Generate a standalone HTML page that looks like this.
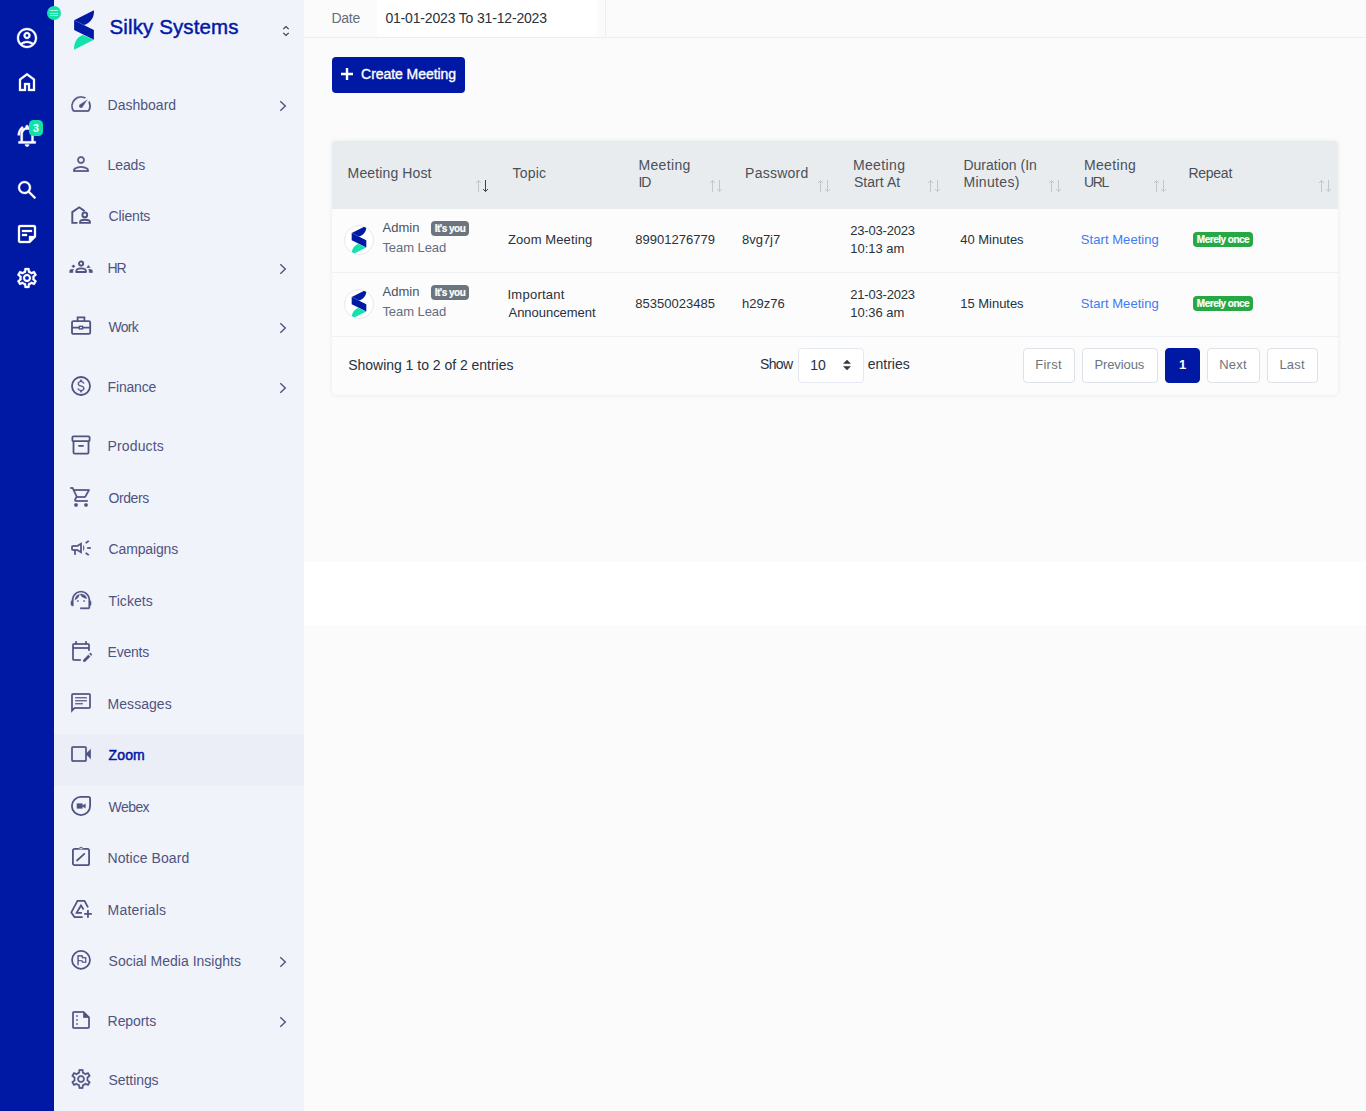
<!DOCTYPE html>
<html lang="en">
<head>
<meta charset="utf-8">
<title>Zoom Meetings - Silky Systems</title>
<style>
*{box-sizing:border-box;margin:0;padding:0}
html,body{width:1366px;height:1111px;overflow:hidden}
body{font-family:"Liberation Sans",sans-serif;background:#fbfbfb;color:#28313c;position:relative;font-size:14px}
a{text-decoration:none;color:inherit}
/* ---------- left rail ---------- */
#rail{position:absolute;left:0;top:0;width:54px;height:1111px;background:#0019a5}
#rail svg{position:absolute;left:15px;width:24px;height:24px;fill:#fff;stroke:#fff;stroke-width:.3}
#rail .cnt{position:absolute;left:29px;top:120px;width:14px;height:16px;border-radius:4.500px;background:#12e2a8;color:#fff;font-size:10.500px;font-weight:bold;line-height:16px;text-align:center}
#tog{position:absolute;left:47px;top:6px;width:14px;height:14px;border-radius:50%;background:#12e2a8;z-index:5}
#tog i{position:absolute;left:3px;width:8px;height:1px;background:#b6f3df}
/* ---------- sidebar ---------- */
#side{position:absolute;left:54px;top:0;width:250px;height:1111px;background:#f1f3fb}
#brand{position:absolute;left:55.500px;top:13px;font-size:20.500px;color:#0019a5;-webkit-text-stroke:.45px #0019a5;letter-spacing:.12px;line-height:28px;white-space:nowrap}
#logo{position:absolute;left:18px;top:9px;width:24px;height:40px}
#updn{position:absolute;left:227px;top:24px;width:10px;height:14px}
.mi{position:absolute;left:0;width:250px;height:50px;color:#4f5380}
.mi.act{color:#0019a5}
#actbg{position:absolute;left:0;top:733.600px;width:250px;height:52.200px;background:#eceef7}
.mi svg.ic{position:absolute;left:15px;top:12px;width:24px;height:24px;fill:#4f5380;stroke:#f1f3fb;stroke-width:.3}
.mi.act svg.ic{stroke:#eceef7}
.mi span{position:absolute;left:54px;top:0;line-height:50px;font-size:14px;white-space:nowrap}
.mi.act span{color:#0019a5;-webkit-text-stroke:.5px #0019a5}
.mi svg.ch{position:absolute;left:224px;top:19.500px;width:10px;height:12px;fill:none;stroke:#4f5380;stroke-width:1.4}
/* ---------- main ---------- */
#top{position:absolute;left:304px;top:0;width:1062px;height:38px;background:#fbfbfb;border-bottom:1px solid #eceef3}
#top .lbl{position:absolute;left:28px;top:0;line-height:36px;font-size:14px;color:#4d5560}
#top .inp{position:absolute;left:73px;top:0;width:220px;height:36.500px;border-radius:0 0 4px 4px;background:#fff;line-height:36px;font-size:14px;color:#28313c;padding-left:11px;white-space:nowrap}
#top .sep{position:absolute;left:301px;top:0;width:1px;height:37px;background:#eceef3}
#btn{position:absolute;left:332px;top:57px;width:133px;height:36px;border-radius:4px;background:#0019a5;color:#fff;font-size:14px;line-height:35px;white-space:nowrap}
#btn b{position:absolute;left:29px;top:0;font-weight:normal}
#btn svg{position:absolute;left:9px;top:11px;width:12px;height:12px}
#band{position:absolute;left:304px;top:562px;width:1062px;height:63px;background:#fff}

.t{position:absolute;white-space:nowrap;line-height:20px}
#card{position:absolute;left:332px;top:141px;width:1006px;height:253.500px;border-radius:4px;background:#fcfcfc;box-shadow:0 0 4px rgba(50,70,130,.11)}
#thead{position:absolute;left:332px;top:141px;width:1006px;height:67.500px;background:#e9ecef;border-radius:4px 4px 0 0}
.hr{position:absolute;left:332px;width:1006px;height:1px;background:#eef0f3}
.av{position:absolute;left:344px;width:30px;height:30px;border-radius:50%;overflow:hidden;background:#fff;border:1px solid #e6e9f2}
.av svg{position:absolute;left:0;top:0;width:28px;height:28px}
.bdg{position:absolute;height:15px;border-radius:4px;-webkit-text-stroke:.2px #fff;color:#fff;font-size:10px;font-weight:bold;line-height:15px;text-align:center;white-space:nowrap;letter-spacing:-.5px}
.srt{position:absolute;top:179px;width:14px;height:14px;fill:none;stroke:#c3c7cc;stroke-width:1}
.pg{position:absolute;top:348px;height:35px;border:1px solid #dee2e6;border-radius:4px;background:#fff}
#sel{position:absolute;left:798px;top:348px;width:66px;height:35px;border:1px solid #e3e8f1;border-radius:4px;background:#fff}
</style>
</head>
<body>
<div id="rail">
<svg style="top:26px" viewBox="0 0 24 24"><path d="M12 2C6.480 2 2 6.480 2 12s4.480 10 10 10 10-4.480 10-10S17.520 2 12 2zM7.350 18.500C8.660 17.560 10.260 17 12 17s3.340.560 4.650 1.500C15.340 19.440 13.740 20 12 20s-3.340-.560-4.650-1.500zm10.790-1.380C16.450 15.800 14.320 15 12 15s-4.450.800-6.140 2.120C4.700 15.730 4 13.950 4 12c0-4.420 3.580-8 8-8s8 3.580 8 8c0 1.950-.700 3.730-1.860 5.120zM12 6c-1.930 0-3.500 1.570-3.500 3.500S10.070 13 12 13s3.500-1.570 3.500-3.500S13.930 6 12 6zm0 5c-.830 0-1.500-.670-1.500-1.500S11.170 8 12 8s1.500.670 1.500 1.500S12.830 11 12 11z"/></svg>
<svg style="top:70px" viewBox="0 0 24 24"><path d="M6 19h3v-6h6v6h3v-9l-6-4.500L6 10Zm-2 2V9l8-6 8 6v12h-7v-6h-2v6Z"/></svg>
<svg style="top:123px;overflow:visible" viewBox="0 0 24 24"><g transform="translate(12.100 12.900) scale(1.080) translate(-12 -12)"><path transform="translate(1.300 1.500)" d="M2 10q0-2.550 1.125-4.775T6.150 1.500L7.350 3.100Q5.750 4.325 4.875 6.137 4 7.950 4 10Z"/><path d="M4 19v-2h2v-7q0-2.075 1.250-3.688Q8.500 4.700 10.500 4.200v-.700q0-.625.438-1.062Q11.375 2 12 2t1.062.438q.438.437.438 1.062v.700q2 .500 3.250 2.112Q18 7.925 18 10v7h2v2ZM12 22q-.825 0-1.412-.587Q10 20.825 10 20h4q0 .825-.587 1.413Q12.825 22 12 22Zm-4-5h8v-7q0-1.650-1.175-2.825Q13.650 6 12 6q-1.650 0-2.825 1.175Q8 8.350 8 10Z"/></g></svg>
<span class="cnt">3</span>
<svg style="top:178px" viewBox="0 0 24 24"><path d="M19.600 21l-6.300-6.300q-.750.600-1.725.950Q10.600 16 9.500 16q-2.725 0-4.612-1.887Q3 12.225 3 9.500q0-2.725 1.888-4.613Q6.775 3 9.500 3t4.613 1.887Q16 6.775 16 9.500q0 1.100-.350 2.075-.350.975-.950 1.725l6.300 6.300ZM9.500 14q1.875 0 3.188-1.312Q14 11.375 14 9.500q0-1.875-1.312-3.188Q11.375 5 9.500 5 7.625 5 6.312 6.312 5 7.625 5 9.500q0 1.875 1.312 3.188Q7.625 14 9.500 14Z"/></svg>
<svg style="top:222px" viewBox="0 0 24 24"><path d="M19 5v9h-5v5H5V5h14m0-2H5c-1.100 0-2 .9-2 2v14c0 1.100.9 2 2 2h10l6-6V5c0-1.100-.9-2-2-2zm-7 11H7v-2h5v2zm5-4H7V8h10v2z"/></svg>
<svg style="top:266px" viewBox="0 0 24 24"><path d="M19.430 12.980c.040-.320.070-.640.070-.980 0-.340-.030-.660-.070-.980l2.110-1.650c.190-.150.240-.420.120-.640l-2-3.460c-.090-.160-.260-.250-.440-.250-.060 0-.120.010-.170.030l-2.490 1c-.520-.400-1.080-.730-1.690-.980l-.380-2.650C14.460 2.180 14.250 2 14 2h-4c-.250 0-.460.180-.490.420l-.380 2.650c-.610.250-1.170.590-1.690.980l-2.490-1c-.060-.020-.120-.030-.180-.030-.170 0-.340.090-.430.250l-2 3.460c-.130.220-.070.490.120.640l2.110 1.650c-.040.320-.070.650-.070.980 0 .330.030.660.070.980l-2.110 1.650c-.190.150-.240.420-.120.640l2 3.460c.090.160.260.250.440.250.060 0 .120-.010.170-.030l2.490-1c.520.400 1.080.730 1.690.980l.380 2.650c.030.240.240.420.490.420h4c.250 0 .460-.180.490-.420l.380-2.650c.610-.250 1.170-.590 1.690-.980l2.490 1c.060.020.120.030.180.030.170 0 .340-.090.430-.250l2-3.460c.120-.220.070-.490-.120-.640l-2.110-1.650zm-1.980-1.710c.040.310.050.520.050.730 0 .210-.020.430-.050.730l-.140 1.130.890.700 1.080.840-.700 1.210-1.270-.510-1.040-.420-.900.680c-.430.320-.840.560-1.250.730l-1.060.430-.160 1.130-.200 1.350h-1.400l-.190-1.350-.160-1.130-1.060-.430c-.430-.180-.830-.410-1.230-.710l-.910-.700-1.060.430-1.270.510-.700-1.210 1.080-.840.890-.700-.140-1.130c-.030-.310-.050-.540-.050-.740s.020-.430.050-.730l.140-1.130-.890-.700-1.080-.840.700-1.210 1.270.510 1.040.420.900-.680c.430-.320.840-.560 1.250-.730l1.060-.430.160-1.130.200-1.350h1.390l.190 1.350.160 1.130 1.060.430c.430.180.830.410 1.230.710l.910.700 1.060-.430 1.270-.510.700 1.210-1.070.850-.890.700.140 1.130zM12 8c-2.210 0-4 1.790-4 4s1.790 4 4 4 4-1.790 4-4-1.790-4-4-4zm0 6c-1.100 0-2-.9-2-2s.9-2 2-2 2 .9 2 2-.9 2-2 2z"/></svg>
</div>
<div id="tog"><i style="top:4px"></i><i style="top:6.5px"></i><i style="top:9px"></i></div>
<!--SIDE-->
<div id="side">
<div id="actbg"></div>
<svg id="logo" style="left:0;top:0;width:60px;height:60px" viewBox="0 0 60 60"><path d="M20.100 20.200L39.900 10.300C40.600 17.500 36 23.700 30 24.900Z" fill="#001aa3"/><path d="M20.100 20.200L39.900 30V39.800L20.100 30Z" fill="#001aa3"/><path d="M20.100 49.700C19.400 42.500 24 36.300 28.900 35.100L39.900 39.800Z" fill="#13e2ab"/></svg>
<div id="brand">Silky Systems</div>
<svg id="updn" viewBox="0 0 10 14"><path d="M2.300 5.200L5 2.500L7.700 5.200M2.300 8.800L5 11.500L7.700 8.800" fill="none" stroke="#3c4043" stroke-width="1.200"/></svg>
<a class="mi" style="top:80px"><svg class="ic" viewBox="0 0 24 24"><path d="M20.380 8.570l-1.230 1.850a8 8 0 0 1-.220 7.580H5.070A8 8 0 0 1 15.580 6.850l1.850-1.230A10 10 0 0 0 3.350 19a2 2 0 0 0 1.720 1h13.850a2 2 0 0 0 1.740-1 10 10 0 0 0-.270-10.440zm-9.790 6.840a2 2 0 0 0 2.830 0l5.660-8.490-8.490 5.660a2 2 0 0 0 0 2.830z"/></svg><span style="left:53.6px;letter-spacing:-0.0px">Dashboard</span><svg class="ch" viewBox="0 0 10 12"><path d="M2.300 1.300L7.300 6L2.300 10.700"/></svg></a>
<a class="mi" style="top:140px"><svg class="ic" viewBox="0 0 24 24"><path d="M12 6c1.100 0 2 .9 2 2s-.9 2-2 2-2-.9-2-2 .9-2 2-2m0 10c2.700 0 5.800 1.290 6 2H6c.230-.720 3.310-2 6-2m0-12C9.790 4 8 5.790 8 8s1.790 4 4 4 4-1.790 4-4-1.790-4-4-4zm0 10c-2.670 0-8 1.340-8 4v2h16v-2c0-2.660-5.330-4-8-4z"/></svg><span style="left:53.6px;letter-spacing:-0.11px">Leads</span></a>
<a class="mi" style="top:191px"><svg class="ic" viewBox="0 0 24 24"><g fill="none" stroke="#4f5380"><path d="M8.500 19.900H3.300V9.100L10.200 4.300L15.600 8.100" stroke-width="1.9"/><circle cx="15.800" cy="11.900" r="2.350" stroke-width="2"/><path d="M11 19.950v-.8c0-1.700 2.900-2.400 5-2.400s5 .7 5 2.400v.8z" stroke-width="1.8" stroke-linejoin="round"/></g></svg><span style="left:54.6px;letter-spacing:-0.17px">Clients</span></a>
<a class="mi" style="top:243px"><svg class="ic" viewBox="0 0 24 24"><g fill="none" stroke="#4f5380"><circle cx="12.100" cy="8.600" r="2.100" stroke-width="1.9"/><path d="M7.200 17v-.6c0-2 2.400-3 4.900-3s4.900 1 4.900 3V17z" stroke-width="1.800" stroke-linejoin="round"/></g><path d="M4.400 9.500L6.500 11.300L4.400 13.100L2.300 11.300zM.300 17.900V16.200c0-1.300 1-2.200 2.400-2.200H5.100c-.6.8-.9 1.700-.9 2.700v1.200zM19.450 9.800L21.700 13.100H17.200zM23.800 17.900V16.200c0-1.300-1-2.200-2.400-2.200H19c.6.8.9 1.700.9 2.700v1.200z"/></svg><span style="left:53.6px;letter-spacing:-1.21px">HR</span><svg class="ch" viewBox="0 0 10 12"><path d="M2.300 1.300L7.300 6L2.300 10.700"/></svg></a>
<a class="mi" style="top:302px"><svg class="ic" viewBox="0 0 24 24"><g fill="none" stroke="#4f5380" stroke-width="1.8"><rect x="3" y="7.100" width="18.200" height="12.800" rx="1.400"/><path d="M8.600 7V3.300h6.800V7M3 13.600h7.400M13.600 13.600H21"/><rect x="10.400" y="12.300" width="3.200" height="2.600" stroke-width="1.400"/></g></svg><span style="left:54.6px;letter-spacing:-0.74px">Work</span><svg class="ch" viewBox="0 0 10 12"><path d="M2.300 1.300L7.300 6L2.300 10.700"/></svg></a>
<a class="mi" style="top:362px"><svg class="ic" viewBox="0 0 24 24"><circle cx="12" cy="12" r="9" fill="none" stroke="#4f5380" stroke-width="1.800"/><path d="M12.310 11.140c-1.770-.450-2.340-.940-2.340-1.670 0-.840.790-1.430 2.100-1.430 1.380 0 1.900.660 1.940 1.640h1.710c-.050-1.340-.870-2.570-2.490-2.970V5H10.900v1.690c-1.510.320-2.720 1.300-2.720 2.810 0 1.790 1.490 2.690 3.660 3.210 1.950.460 2.340 1.150 2.340 1.870 0 .530-.390 1.390-2.100 1.390-1.600 0-2.230-.720-2.320-1.640H8.040c.100 1.700 1.360 2.660 2.860 2.970V19h2.340v-1.670c1.520-.290 2.720-1.160 2.730-2.770-.010-2.200-1.900-2.960-3.660-3.420z" transform="translate(12 12) scale(.93) translate(-12 -12)"/></svg><span style="left:53.6px;letter-spacing:-0.19px">Finance</span><svg class="ch" viewBox="0 0 10 12"><path d="M2.300 1.300L7.300 6L2.300 10.700"/></svg></a>
<a class="mi" style="top:421px"><svg class="ic" viewBox="0 0 24 24"><g fill="none" stroke="#4f5380" stroke-width="1.8"><rect x="3.400" y="3.400" width="17.200" height="4.800" rx="1"/><path d="M4.500 8.300v11.200c0 .6.500 1.100 1.100 1.100h12.800c.6 0 1.100-.5 1.100-1.100V8.300M9.300 12.800h5.400"/></g></svg><span style="left:53.6px;letter-spacing:0.12px">Products</span></a>
<a class="mi" style="top:473px"><svg class="ic" viewBox="0 0 24 24"><path d="M15.550 13c.750 0 1.410-.410 1.750-1.030l3.580-6.490c.370-.660-.110-1.480-.870-1.480H5.210l-.940-2H1v2h2l3.600 7.590-1.350 2.440C4.520 15.370 5.480 17 7 17h12v-2H7l1.100-2h7.450zM6.160 6h12.150l-2.760 5H8.530L6.160 6zM7 18c-1.100 0-1.990.9-1.990 2S5.900 22 7 22s2-.9 2-2-.9-2-2-2zm10 0c-1.100 0-1.990.9-1.990 2s.890 2 1.990 2 2-.9 2-2-.9-2-2-2z"/></svg><span style="left:54.6px;letter-spacing:-0.44px">Orders</span></a>
<a class="mi" style="top:524px"><svg class="ic" viewBox="0 0 24 24"><path d="M18 11v2h4v-2h-4zm-2 6.610c.960.710 2.210 1.650 3.200 2.390.400-.530.800-1.070 1.200-1.600-.990-.740-2.240-1.680-3.200-2.400-.400.540-.800 1.080-1.200 1.610zM20.400 5.600c-.400-.530-.800-1.070-1.200-1.600-.990.740-2.240 1.680-3.200 2.400.400.530.800 1.070 1.200 1.600.960-.720 2.210-1.650 3.200-2.400zM4 9c-1.100 0-2 .9-2 2v2c0 1.100.9 2 2 2h1v4h2v-4h1l5 3V6L8 9H4zm5.030 1.710L11 9.530v4.940l-1.970-1.180-.480-.290H4v-2h4.550l.480-.290zM15.500 12c0-1.330-.580-2.530-1.500-3.350v6.690c.920-.810 1.500-2.010 1.500-3.340z"/></svg><span style="left:54.6px;letter-spacing:-0.16px">Campaigns</span></a>
<a class="mi" style="top:576px"><svg class="ic" viewBox="0 0 24 24"><g transform="translate(12 12) scale(1.04) translate(-12 -12)"><path d="M21 12.220C21 6.730 16.740 3 12 3c-4.690 0-9 3.650-9 9.280-.600.340-1 .980-1 1.720v2c0 1.100.900 2 2 2h1v-6.100c0-3.870 3.130-7 7-7s7 3.130 7 7V19h-8v2h8c1.100 0 2-.900 2-2v-1.220c.590-.310 1-.920 1-1.640v-2.300c0-.700-.410-1.310-1-1.620z"/><circle cx="9" cy="13" r="1"/><circle cx="15" cy="13" r="1"/><path d="M18 11.030C17.520 8.180 15.040 6 12.050 6c-3.030 0-6.290 2.510-6.030 6.450 2.470-1.010 4.330-3.210 4.860-5.890 1.310 2.630 4 4.440 7.120 4.470z"/></g></svg><span style="left:54.6px;letter-spacing:0.06px">Tickets</span></a>
<a class="mi" style="top:627px"><svg class="ic" viewBox="0 0 24 24"><path d="M5 10h14v2h2V6c0-1.100-.9-2-2-2h-1V2h-2v2H8V2H6v2H5c-1.110 0-1.990.9-1.990 2L3 20c0 1.100.890 2 2 2h7v-2H5V10zm0-4h14v2H5V6zm17.840 10.280l-.710.710-2.120-2.120.710-.710c.390-.390 1.020-.390 1.410 0l.710.710c.390.390.390 1.020 0 1.410zm-3.540-.700l2.120 2.120-5.300 5.300H14v-2.120l5.300-5.300z"/></svg><span style="left:53.6px;letter-spacing:-0.22px">Events</span></a>
<a class="mi" style="top:679px"><svg class="ic" viewBox="0 0 24 24"><path d="M4 4h16v12H5.170L4 17.170V4m0-2c-1.100 0-1.990.9-1.990 2L2 22l4-4h14c1.100 0 2-.9 2-2V4c0-1.100-.9-2-2-2H4zm2 10h8v1.600H6V12zm0-3h12v1.600H6V9zm0-3h12v1.600H6V6z"/></svg><span style="left:53.6px;letter-spacing:0.04px">Messages</span></a>
<a class="mi act" style="top:730px"><svg class="ic" viewBox="0 0 24 24"><path d="M4 20q-.825 0-1.412-.587Q2 18.825 2 18V6q0-.825.588-1.412Q3.175 4 4 4h12q.825 0 1.413.588Q18 5.175 18 6v4.500l4-4v11l-4-4V18q0 .825-.587 1.413Q16.825 20 16 20Zm0-2h12V6H4v12Z"/></svg><span style="left:54.6px;letter-spacing:0.13px">Zoom</span></a>
<a class="mi" style="top:782px"><svg class="ic" viewBox="0 0 24 24"><path d="M12 2.900H19.600a1.500 1.500 0 0 1 1.500 1.500V12A9.100 9.100 0 1 1 12 2.900Z" fill="none" stroke="#4f5380" stroke-width="1.800"/><path d="M7.600 9.200h6.100v1.900l3.100-1.600v5l-3.100-1.600v1.900H7.600z"/></svg><span style="left:54.6px;letter-spacing:-0.58px">Webex</span></a>
<a class="mi" style="top:833px"><svg class="ic" viewBox="0 0 24 24"><g fill="none" stroke="#4f5380"><rect x="3.900" y="3.900" width="16.200" height="16.200" rx="1.700" stroke-width="1.800"/><path d="M8 15.500L15.300 8.900" stroke-width="1.700" stroke-linecap="round"/></g><path d="M9.800 3.900a2.200 2.200 0 0 1 4.400 0z"/><circle cx="12" cy="3.600" r=".7" fill="#f1f3fb"/></svg><span style="left:53.6px;letter-spacing:0.06px">Notice Board</span></a>
<a class="mi" style="top:885px"><svg class="ic" viewBox="0 0 24 24"><g fill="none" stroke="#4f5380" stroke-width="1.75"><path d="M19 10.400L15.500 3.900H8.500L2.300 15.400L5.500 20.100H13.700"/><path d="M12.900 15.900H7.600L12 8.500L14.600 12.400"/><path d="M15.200 16.900H22.800M18.950 13.100V20.700"/></g></svg><span style="left:53.6px;letter-spacing:0.2px">Materials</span></a>
<a class="mi" style="top:936px"><svg class="ic" viewBox="0 0 24 24"><circle cx="12" cy="11.900" r="8.950" fill="none" stroke="#4f5380" stroke-width="1.750"/><path fill-rule="evenodd" d="M8.200 17.200V7.100h5.500l.7 1.900h3.100v5.900h-4.500l-.7-1.600h-2.400v3.900zM9.900 8.800v3.100h3.500l.7 1.600h1.900V10.600h-2.900l-.7-1.800z"/></svg><span style="left:54.6px;letter-spacing:-0.0px">Social Media Insights</span><svg class="ch" viewBox="0 0 10 12"><path d="M2.300 1.300L7.300 6L2.300 10.700"/></svg></a>
<a class="mi" style="top:996px"><svg class="ic" viewBox="0 0 24 24"><path d="M15 3H5c-1.100 0-1.990.900-1.990 2L3 19c0 1.100.890 2 1.990 2H19c1.100 0 2-.900 2-2V9l-6-6zM5 19V5h9v5h5v9H5zM9 8c0 .550-.450 1-1 1s-1-.450-1-1 .450-1 1-1 1 .450 1 1zm0 4c0 .550-.450 1-1 1s-1-.450-1-1 .450-1 1-1 1 .450 1 1zm0 4c0 .550-.450 1-1 1s-1-.450-1-1 .450-1 1-1 1 .450 1 1z"/></svg><span style="left:53.6px;letter-spacing:-0.07px">Reports</span><svg class="ch" viewBox="0 0 10 12"><path d="M2.300 1.300L7.300 6L2.300 10.700"/></svg></a>
<a class="mi" style="top:1055px"><svg class="ic" viewBox="0 0 24 24"><path d="M19.430 12.980c.040-.320.070-.640.070-.980 0-.340-.030-.660-.070-.980l2.110-1.650c.190-.150.240-.420.120-.640l-2-3.460c-.090-.160-.260-.250-.440-.250-.060 0-.120.010-.170.030l-2.490 1c-.520-.400-1.080-.730-1.690-.980l-.380-2.650C14.460 2.180 14.250 2 14 2h-4c-.250 0-.460.180-.490.420l-.380 2.650c-.610.250-1.170.590-1.690.980l-2.490-1c-.060-.020-.120-.030-.180-.030-.170 0-.340.090-.430.250l-2 3.460c-.130.220-.070.490.120.640l2.110 1.650c-.040.320-.070.650-.070.980 0 .330.030.660.070.980l-2.110 1.650c-.190.150-.240.420-.120.640l2 3.460c.090.160.260.250.440.250.060 0 .120-.010.170-.030l2.490-1c.520.400 1.080.730 1.690.980l.380 2.650c.030.240.240.420.490.420h4c.250 0 .460-.180.490-.420l.380-2.650c.610-.250 1.170-.590 1.690-.980l2.490 1c.060.020.120.030.180.030.170 0 .340-.090.430-.250l2-3.460c.120-.220.070-.490-.120-.640l-2.110-1.650zm-1.980-1.710c.040.310.050.520.050.730 0 .210-.020.430-.050.730l-.140 1.130.890.700 1.080.840-.700 1.210-1.270-.510-1.040-.420-.900.680c-.430.320-.840.560-1.250.730l-1.060.430-.160 1.130-.200 1.350h-1.400l-.190-1.350-.160-1.130-1.060-.430c-.430-.180-.830-.410-1.230-.710l-.910-.700-1.060.430-1.270.510-.700-1.210 1.080-.840.890-.700-.140-1.130c-.030-.310-.050-.540-.050-.740s.020-.430.050-.730l.140-1.130-.890-.700-1.080-.840.700-1.210 1.270.510 1.040.420.900-.680c.430-.320.840-.560 1.250-.730l1.060-.430.160-1.130.200-1.350h1.390l.190 1.350.160 1.130 1.060.430c.430.180.830.410 1.230.710l.910.700 1.060-.430 1.270-.510.700 1.210-1.070.850-.890.700.140 1.130zM12 8c-2.210 0-4 1.790-4 4s1.790 4 4 4 4-1.790 4-4-1.790-4-4-4zm0 6c-1.100 0-2-.9-2-2s.9-2 2-2 2 .9 2 2-.9 2-2 2z"/></svg><span style="left:54.6px;letter-spacing:-0.08px">Settings</span></a>
</div>
<!--/SIDE-->
<!--MAIN-->
<div id="top"><div class="inp"></div><div class="sep"></div></div>
<a id="btn"><svg viewBox="0 0 12 12"><path d="M4.800 0h2.400v4.800H12v2.400H7.200V12H4.800V7.200H0V4.800h4.800z" fill="#fff"/></svg></a>
<span class="t" style="left:331.4px;top:8.1px;font-size:14px;color:#616e80;letter-spacing:-0.23px;">Date</span>
<span class="t" style="left:385.4px;top:8.1px;font-size:14px;color:#28313c;letter-spacing:-0.17px;">01-01-2023 To 31-12-2023</span>
<span class="t" style="left:361.1px;top:64.1px;font-size:14px;color:#fff;-webkit-text-stroke:.35px #fff;letter-spacing:-0.06px;">Create Meeting</span>
<div id="card"></div><div id="thead"></div>
<div class="hr" style="top:272px"></div><div class="hr" style="top:336px"></div>
<svg class="srt" style="left:474px" viewBox="0 0 14 14"><path d="M4.500 13V1.500M2 4L4.500 1.500L7 4"/><path d="M11.500 1V12.500M9 10L11.500 12.500L14 10" stroke="#3c4248"/></svg>
<svg class="srt" style="left:708px" viewBox="0 0 14 14"><path d="M4.500 13V1.500M2 4L4.500 1.500L7 4"/><path d="M11.500 1V12.500M9 10L11.500 12.500L14 10"/></svg>
<svg class="srt" style="left:816px" viewBox="0 0 14 14"><path d="M4.500 13V1.500M2 4L4.500 1.500L7 4"/><path d="M11.500 1V12.500M9 10L11.500 12.500L14 10"/></svg>
<svg class="srt" style="left:926px" viewBox="0 0 14 14"><path d="M4.500 13V1.500M2 4L4.500 1.500L7 4"/><path d="M11.500 1V12.500M9 10L11.500 12.500L14 10"/></svg>
<svg class="srt" style="left:1047px" viewBox="0 0 14 14"><path d="M4.500 13V1.500M2 4L4.500 1.500L7 4"/><path d="M11.500 1V12.500M9 10L11.500 12.500L14 10"/></svg>
<svg class="srt" style="left:1151.5px" viewBox="0 0 14 14"><path d="M4.500 13V1.500M2 4L4.500 1.500L7 4"/><path d="M11.500 1V12.500M9 10L11.500 12.500L14 10"/></svg>
<svg class="srt" style="left:1316.5px" viewBox="0 0 14 14"><path d="M4.500 13V1.500M2 4L4.500 1.500L7 4"/><path d="M11.500 1V12.500M9 10L11.500 12.500L14 10"/></svg>
<div class="av" style="top:224.5px"><svg viewBox="0 0 28 28"><g transform="translate(14 14.200) scale(.737) translate(-30 -30)"><path d="M20.100 20.200L39.900 10.300C40.600 17.500 36 23.700 30 24.900Z" fill="#001aa3"/><path d="M20.100 20.200L39.900 30V39.800L20.100 30Z" fill="#001aa3"/><path d="M20.100 49.700C19.400 42.500 24 36.300 28.900 35.100L39.900 39.800Z" fill="#13e2ab"/></g></svg></div>
<span class="bdg" style="left:431px;top:221px;width:38px;background:#6c757d">It's you</span>
<span class="bdg" style="left:1193px;top:232px;width:60px;background:#28a745">Merely once</span>
<div class="av" style="top:288.5px"><svg viewBox="0 0 28 28"><g transform="translate(14 14.200) scale(.737) translate(-30 -30)"><path d="M20.100 20.200L39.900 10.300C40.600 17.500 36 23.700 30 24.900Z" fill="#001aa3"/><path d="M20.100 20.200L39.900 30V39.800L20.100 30Z" fill="#001aa3"/><path d="M20.100 49.700C19.400 42.500 24 36.300 28.900 35.100L39.900 39.800Z" fill="#13e2ab"/></g></svg></div>
<span class="bdg" style="left:431px;top:285px;width:38px;background:#6c757d">It's you</span>
<span class="bdg" style="left:1193px;top:296px;width:60px;background:#28a745">Merely once</span>
<div id="sel"><svg style="position:absolute;left:43px;top:10px;width:10px;height:12px" viewBox="0 0 10 12"><path d="M1 4.700L5 0.700L9 4.700ZM1 7.300L5 11.300L9 7.300Z" fill="#343a40"/></svg></div>
<div class="pg" style="left:1023px;width:52px;"></div>
<div class="pg" style="left:1082px;width:76px;"></div>
<div class="pg" style="left:1165px;width:35px;background:#0019a5;border-color:#0019a5;"></div>
<div class="pg" style="left:1207px;width:53px;"></div>
<div class="pg" style="left:1267px;width:51px;"></div>
<span class="t" style="left:347.6px;top:163.2px;font-size:14px;color:#495057;letter-spacing:0.13px;">Meeting Host</span>
<span class="t" style="left:512.6px;top:163.2px;font-size:14px;color:#495057;letter-spacing:0.18px;">Topic</span>
<span class="t" style="left:638.4px;top:155.3px;font-size:14px;color:#495057;letter-spacing:0.36px;">Meeting</span>
<span class="t" style="left:638.4px;top:172.1px;font-size:14px;color:#495057;letter-spacing:-1.09px;">ID</span>
<span class="t" style="left:745.1px;top:163.2px;font-size:14px;color:#495057;letter-spacing:0.23px;">Password</span>
<span class="t" style="left:852.9px;top:155.3px;font-size:14px;color:#495057;letter-spacing:0.38px;">Meeting</span>
<span class="t" style="left:853.9px;top:172.1px;font-size:14px;color:#495057;letter-spacing:0.06px;">Start At</span>
<span class="t" style="left:963.4px;top:155.3px;font-size:14px;color:#495057;letter-spacing:0.03px;">Duration (In</span>
<span class="t" style="left:963.4px;top:172.1px;font-size:14px;color:#495057;letter-spacing:0.33px;">Minutes)</span>
<span class="t" style="left:1083.9px;top:155.3px;font-size:14px;color:#495057;letter-spacing:0.36px;">Meeting</span>
<span class="t" style="left:1083.9px;top:172.1px;font-size:14px;color:#495057;letter-spacing:-1.31px;">URL</span>
<span class="t" style="left:1188.4px;top:163.2px;font-size:14px;color:#495057;letter-spacing:-0.25px;">Repeat</span>
<span class="t" style="left:382.4px;top:217.5px;font-size:13px;color:#4a525d;letter-spacing:0.07px;">Admin</span>
<span class="t" style="left:382.4px;top:237.9px;font-size:13px;color:#616e80;letter-spacing:-0.06px;">Team Lead</span>
<span class="t" style="left:635.3px;top:229.8px;font-size:13px;color:#28313c;letter-spacing:0.02px;">89901276779</span>
<span class="t" style="left:742.0px;top:229.8px;font-size:13px;color:#28313c;letter-spacing:-0.02px;">8vg7j7</span>
<span class="t" style="left:850.2px;top:220.8px;font-size:13px;color:#28313c;letter-spacing:-0.19px;">23-03-2023</span>
<span class="t" style="left:850.2px;top:238.6px;font-size:13px;color:#28313c;letter-spacing:-0.01px;">10:13 am</span>
<span class="t" style="left:960.3px;top:229.8px;font-size:13px;color:#28313c;letter-spacing:-0.03px;">40 Minutes</span>
<span class="t" style="left:1080.8px;top:229.8px;font-size:13px;color:#3d7bf2;letter-spacing:0.06px;">Start Meeting</span>
<span class="t" style="left:508.0px;top:229.8px;font-size:13px;color:#28313c;letter-spacing:0.1px;">Zoom Meeting</span>
<span class="t" style="left:382.4px;top:281.5px;font-size:13px;color:#4a525d;letter-spacing:0.07px;">Admin</span>
<span class="t" style="left:382.4px;top:301.9px;font-size:13px;color:#616e80;letter-spacing:-0.06px;">Team Lead</span>
<span class="t" style="left:635.3px;top:293.8px;font-size:13px;color:#28313c;letter-spacing:0.02px;">85350023485</span>
<span class="t" style="left:742.0px;top:293.8px;font-size:13px;color:#28313c;letter-spacing:0.02px;">h29z76</span>
<span class="t" style="left:850.2px;top:284.8px;font-size:13px;color:#28313c;letter-spacing:-0.19px;">21-03-2023</span>
<span class="t" style="left:850.2px;top:302.6px;font-size:13px;color:#28313c;letter-spacing:-0.01px;">10:36 am</span>
<span class="t" style="left:960.3px;top:293.8px;font-size:13px;color:#28313c;letter-spacing:-0.03px;">15 Minutes</span>
<span class="t" style="left:1080.8px;top:293.8px;font-size:13px;color:#3d7bf2;letter-spacing:0.06px;">Start Meeting</span>
<span class="t" style="left:507.5px;top:284.6px;font-size:13px;color:#28313c;letter-spacing:0.25px;">Important</span>
<span class="t" style="left:508.5px;top:302.6px;font-size:13px;color:#28313c;letter-spacing:-0.03px;">Announcement</span>
<span class="t" style="left:348.2px;top:355.0px;font-size:14px;color:#28313c;letter-spacing:-0.02px;">Showing 1 to 2 of 2 entries</span>
<span class="t" style="left:760.1px;top:354.0px;font-size:14px;color:#28313c;letter-spacing:-0.7px;">Show</span>
<span class="t" style="left:810.3px;top:355.0px;font-size:14px;color:#28313c;letter-spacing:-0.09px;">10</span>
<span class="t" style="left:867.7px;top:354.0px;font-size:14px;color:#28313c;">entries</span>
<span class="t" style="left:1035.3px;top:354.9px;font-size:13px;color:#6c757d;letter-spacing:0.24px;">First</span>
<span class="t" style="left:1094.4px;top:354.9px;font-size:13px;color:#6c757d;letter-spacing:-0.1px;">Previous</span>
<span class="t" style="left:1178.9px;top:354.9px;font-size:13px;color:#fff;font-weight:bold;">1</span>
<span class="t" style="left:1219.3px;top:354.9px;font-size:13px;color:#6c757d;letter-spacing:0.16px;">Next</span>
<span class="t" style="left:1279.4px;top:354.9px;font-size:13px;color:#6c757d;letter-spacing:0.21px;">Last</span>
<!--/MAIN-->
<div id="band"></div>
</body>
</html>
